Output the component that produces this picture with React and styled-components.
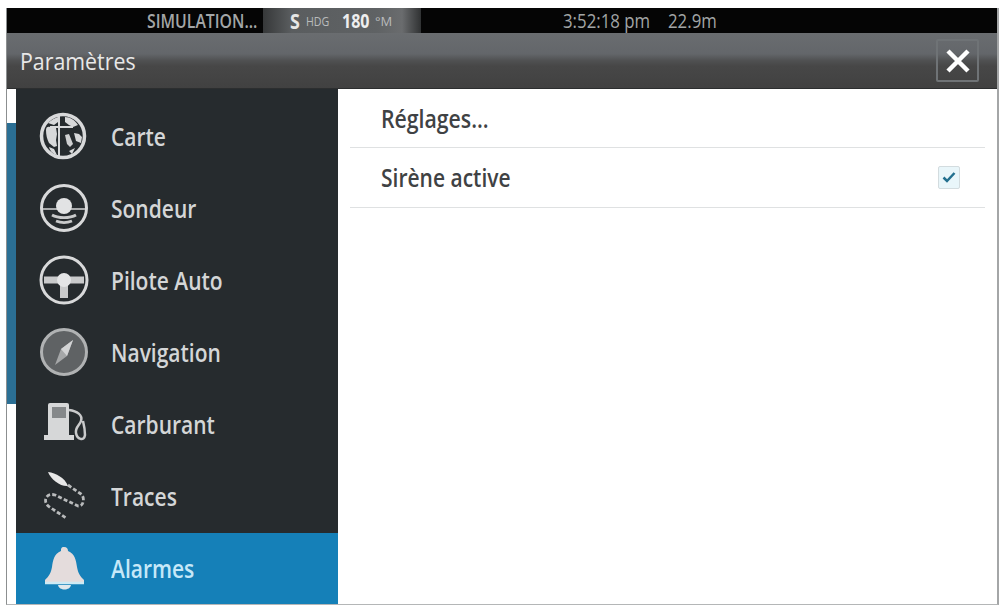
import React from "react";
import styled, { createGlobalStyle } from "styled-components";

const Global = createGlobalStyle`
  html, body { margin: 0; padding: 0; background: #fff; }
  body { width: 1001px; height: 606px; overflow: hidden; font-family: "Open Sans", "Noto Sans", sans-serif; }
`;
const Frame = styled.div`
  margin: 8px 2px 0 6px;
  height: 597px;
  display: flex;
  flex-direction: column;
  border-left: 1px solid #8c8f90;
  border-right: 2px solid #a4a6a7;
  border-bottom: 1px solid #b4b6b7;
  box-sizing: border-box;
  background: #fff;
`;
const StatusBar = styled.div`
  height: 25px;
  background: #050505;
  display: flex;
  align-items: center;
  flex: none;
  color: #a9acad;
`;
const Cond = styled.span`
  display: inline-block;
  transform: scaleX(${p => p.$x || 0.85});
  transform-origin: left center;
  white-space: nowrap;
`;
const Sim = styled.div`
  margin-left: 140px;
  width: 116px;
  font-size: 20px;
  font-weight: 600;
  color: #a3a6a7;
`;
const Hdg = styled.div`
  width: 158px;
  height: 100%;
  background: linear-gradient(90deg, #363839 0%, #5a5d5f 18%, #5f6264 72%, #6a6c6e 88%, #303233 100%);
  display: flex;
  align-items: center;
  padding-left: 27px;
  box-sizing: border-box;
  color: #e6e6e6;
  font-weight: 700;
`;
const HdgS = styled.span`font-size: 21px; width: 16px;`;
const HdgSmall = styled.span`font-size: 13px; font-weight: 400; color: #b9bbbc; width: ${p => p.$w}px;`;
const HdgVal = styled.span`font-size: 20px; width: 33px; color: #eee;`;
const Clock = styled.div`
  margin-left: 142px;
  font-size: 20px;
  color: #a2a5a6;
  display: flex;
  gap: 17px;
`;
const ClockPart = styled.span`width: ${p => p.$w}px;`;
const TitleBar = styled.div`
  height: 56px;
  flex: none;
  background: linear-gradient(180deg, #6a6d70 0%, #63666a 38%, #505152 50%, #474747 60%, #414141 100%);
  border-bottom: 1px solid #2c2e2f;
  box-sizing: border-box;
  display: flex;
  align-items: center;
  justify-content: space-between;
  padding: 0 18px 0 13px;
  color: #e8e8e8;
  font-size: 24px;
  font-weight: 500;
`;
const Close = styled.button`
  width: 43px;
  height: 43px;
  padding: 0;
  background: transparent;
  border: 2px solid #6f7376;
  border-radius: 2px;
  display: flex;
  align-items: center;
  justify-content: center;
`;
const Body = styled.div`
  flex: 1;
  display: flex;
  min-height: 0;
`;
const Track = styled.div`
  width: 9px;
  flex: none;
  background: #fff;
  padding-top: 34px;
  box-sizing: border-box;
`;
const Thumb = styled.div`
  height: 281px;
  background: #2b6f94;
`;
const Side = styled.nav`
  width: 322px;
  flex: none;
  background: #262b2e;
  display: flex;
  flex-direction: column;
  padding-top: 11px;
  box-sizing: border-box;
`;
const Item = styled.div`
  height: ${p => (p.$active ? 71 : 72)}px;
  margin-top: ${p => (p.$active ? 1 : 0)}px;
  padding-bottom: ${p => (p.$active ? 2 : 0)}px;
  flex: none;
  display: flex;
  align-items: center;
  box-sizing: border-box;
  padding-left: 21px;
  gap: 20px;
  color: ${p => (p.$active ? "#c6e8f8" : "#d4d6d7")};
  font-size: 25px;
  font-weight: 600;
  background: ${p => (p.$active ? "#1580b8" : "transparent")};
`;
const IconBox = styled.span`
  width: 54px;
  height: 54px;
  flex: none;
  display: flex;
  align-items: center;
  justify-content: center;
`;
const Content = styled.main`
  flex: 1;
  padding: 0 12px;
  min-width: 0;
`;
const Row = styled.div`
  height: 59px;
  border-bottom: 1px solid #dfe1e2;
  display: flex;
  align-items: center;
  justify-content: space-between;
  padding: 0 26px 0 31px;
  box-sizing: border-box;
  color: #3f4244;
  font-size: 25px;
  font-weight: 600;
  &:last-child { height: 60px; padding-bottom: 1px; }
`;
const Check = styled.span`
  width: 22px;
  height: 23px;
  margin-right: -1px;
  box-sizing: border-box;
  background: #e9f6fa;
  border: 1px solid #d3dcdf;
  border-radius: 2px;
  display: flex;
  align-items: center;
  justify-content: center;
`;

const I = ({ children }) => (
  <IconBox>
    <svg width="54" height="54" viewBox="0 0 54 54" fill="none">{children}</svg>
  </IconBox>
);
const items = [
  ["Carte", <I key="c">
    <circle cx="26" cy="27" r="21.500" stroke="#d8d9da" strokeWidth="3.500" />
    <path d="M9 21c0-3 2-4 4-3l6 1 1 6-1 6 1 6-3 1-5-4c-2-4-3-8-3-13zM11 14c3-3 7-5 10-6v5l-4 3zM28 8c5 0 10 3 13 8l-5 2-4-2-4-3zM12 38l5 2 3 6c-4-1-7-4-8-8zM37 24l5 1 3 3-1 6-5-2zM32 42l6-3-3 6z" fill="#d8d9da" />
    <path d="M13 18h23M22 7v40" stroke="#d8d9da" strokeWidth="2" />
    <path d="M28 26l4-1 4 10-3 3-3-3z" fill="#cfd0d1" />
  </I>],
  ["Sondeur", <I key="s">
    <circle cx="27" cy="27" r="22.500" stroke="#d8d9da" strokeWidth="3" />
    <path d="M6 28h42" stroke="#a9abac" strokeWidth="2" />
    <circle cx="27" cy="25" r="8" fill="#e2e3e4" />
    <path d="M15 34c6 3.500 18 3.500 24 0" stroke="#c9cacb" strokeWidth="2.800" />
    <path d="M19 40c5 2 11 2 16 0" stroke="#c9cacb" strokeWidth="2.800" />
  </I>],
  ["Pilote Auto", <I key="p">
    <circle cx="27" cy="27" r="23" stroke="#d8d9da" strokeWidth="3" />
    <path d="M7 27h40" stroke="#c9cacb" strokeWidth="7" />
    <path d="M27 27v18" stroke="#c9cacb" strokeWidth="8" />
    <circle cx="27" cy="27" r="7" fill="#e4e5e6" />
  </I>],
  ["Navigation", <I key="n">
    <circle cx="27" cy="27" r="22.500" fill="#5f6264" stroke="#b0b2b3" strokeWidth="3" />
    <path d="M36 15L30 31 18 40l6-16z" fill="#a5a7a8" />
    <path d="M36 15L24 24l6 7z" fill="#d2d3d4" />
  </I>],
  ["Carburant", <I key="f">
    <path d="M13 6h17a2 2 0 0 1 2 2v30H11V8a2 2 0 0 1 2-2z" fill="#d6d7d8" />
    <rect x="15" y="10" width="14" height="11" fill="#85888a" />
    <path d="M7 38h30v5H7z" fill="#d6d7d8" />
    <path d="M32 13c8 1 14 5 12 11-1 4-6 6-5 12 1 6 8 9 9 2 0-4-1-10-2-14" stroke="#c9cacb" strokeWidth="2.500" />
  </I>],
  ["Traces", <I key="t">
    <path d="M11 3c8 1 17 6 20 14-7 1-17-6-20-14z" fill="#e8e8e8" />
    <path d="M31 16l13 9c4 3 3 13-3 12l-23-11c-6-2-11 2-9 8 1 3 5 5 8 7l12 8" stroke="#b9bbbc" strokeWidth="2.800" strokeDasharray="4 2.200" />
  </I>],
  ["Alarmes", <I key="a">
    <path d="M27 6c3 0 4 2 4 4 7 3 8 9 9 16 1 6 3 9 7 13v3H8v-3c4-4 6-7 7-13 1-7 2-13 9-16 0-2 0-4 3-4z" fill="#e4dcdc" />
    <path d="M8 42h39" stroke="#cdeaf4" strokeWidth="2.500" />
    <path d="M21 44h13c-1 6-12 6-13 0z" fill="#dfe8ec" />
  </I>],
];

export default function App() {
  return (
    <>
      <Global />
      <Frame>
        <StatusBar>
          <Sim><Cond $x={0.79}>SIMULATION...</Cond></Sim>
          <Hdg>
            <HdgS><Cond>S</Cond></HdgS>
            <HdgSmall $w={36}><Cond $x={0.82}>HDG</Cond></HdgSmall>
            <HdgVal><Cond $x={0.8}>180</Cond></HdgVal>
            <HdgSmall $w={20}>°M</HdgSmall>
          </Hdg>
          <Clock>
            <ClockPart $w={88}><Cond $x={0.84}>3:52:18 pm</Cond></ClockPart>
            <ClockPart $w={50}><Cond $x={0.84}>22.9m</Cond></ClockPart>
          </Clock>
        </StatusBar>
        <TitleBar>
          <Cond $x={0.89}>Paramètres</Cond>
          <Close aria-label="Fermer">
            <svg width="28" height="28" viewBox="0 0 28 28">
              <path d="M4 4l20 20M24 4L4 24" stroke="#fff" strokeWidth="4.500" />
            </svg>
          </Close>
        </TitleBar>
        <Body>
          <Track><Thumb /></Track>
          <Side>
            {items.map(([label, icon]) => (
              <Item key={label} $active={label === "Alarmes"}>
                {icon}
                <Cond $x={0.84}>{label}</Cond>
              </Item>
            ))}
          </Side>
          <Content>
            <Row><Cond $x={0.85}>Réglages...</Cond></Row>
            <Row>
              <Cond $x={0.84}>Sirène active</Cond>
              <Check>
                <svg width="16" height="16" viewBox="0 0 16 16" fill="none">
                  <path d="M2.500 8.500l3.500 3.500 7.500-8" stroke="#23708f" strokeWidth="2.500" />
                </svg>
              </Check>
            </Row>
          </Content>
        </Body>
      </Frame>
    </>
  );
}
